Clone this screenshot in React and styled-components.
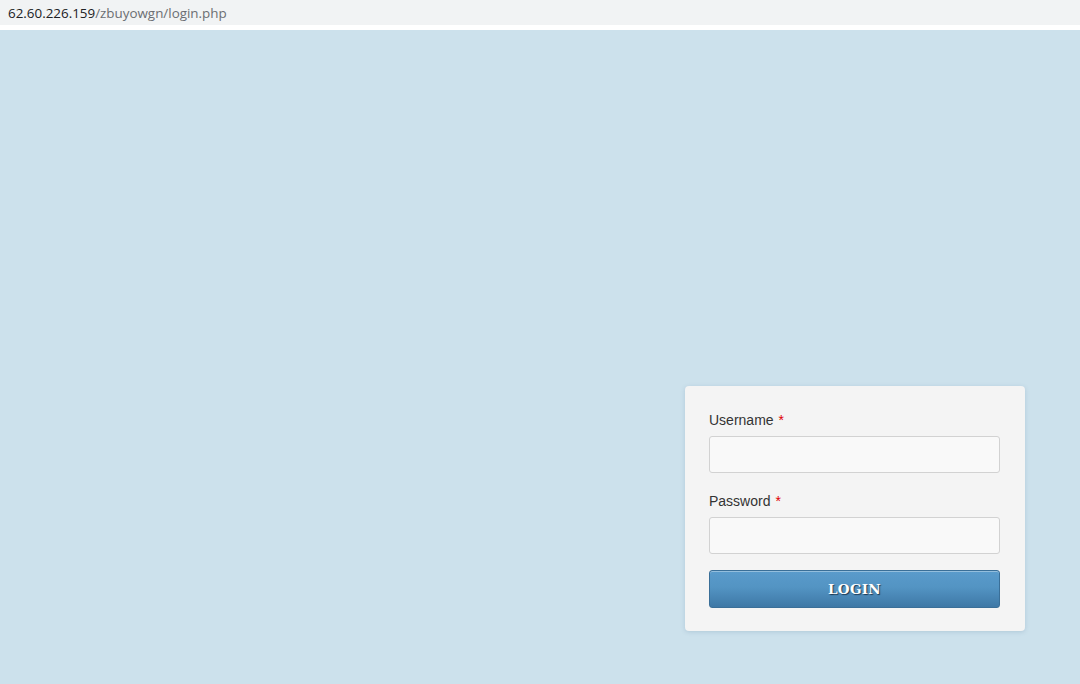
import styled, { createGlobalStyle } from "styled-components";

const GlobalStyle = createGlobalStyle`
  html, body {
    margin: 0;
    padding: 0;
    height: 100%;
  }
  body {
    background: #cce1ec;
    font-family: "Liberation Sans", Arial, sans-serif;
  }
  #root {
    min-height: 100%;
  }
`;

const Page = styled.div`
  display: flex;
  flex-direction: column;
  height: 684px;
  overflow: hidden;
`;

const AddressBar = styled.div`
  height: 25px;
  flex: none;
  display: flex;
  align-items: center;
  padding: 0 8px;
  background: #f1f3f4;
  border-bottom: 5px solid #ffffff;
  font-family: "Open Sans", "Noto Sans", sans-serif;
  font-size: 13.4px;
  color: #202124;
`;

const Path = styled.span`
  color: #6b6e72;
`;

const Stage = styled.main`
  flex: 1;
  display: flex;
  justify-content: flex-end;
  align-items: flex-start;
  padding: 356px 55px 0 0;
`;

const Card = styled.form`
  width: 340px;
  box-sizing: border-box;
  padding: 25px 25px 23px 24px;
  background: #f4f4f4;
  border-radius: 4px;
  box-shadow: 0 1px 4px rgba(90, 130, 160, 0.25);
  display: flex;
  flex-direction: column;
`;

const Field = styled.div`
  display: flex;
  flex-direction: column;
  margin-bottom: ${(p) => p.$gap || "18px"};
`;

const Label = styled.label`
  font-size: 14px;
  color: #333333;
  line-height: 18px;
  margin: 0 0 7px 0;
`;

const Required = styled.span`
  color: #e00000;
  margin-left: 5px;
`;

const Input = styled.input`
  height: 37px;
  box-sizing: border-box;
  border: 1px solid #d2d2d2;
  border-radius: 3px;
  background: #f9f9f9;
  padding: 0 8px;
  font-size: 14px;
  outline: none;
`;

const LoginButton = styled.button`
  height: 38px;
  border: 1px solid #3a6f98;
  border-radius: 3px;
  background: linear-gradient(#5a9bcb, #5394c3 45%, #3e78a6);
  box-shadow: inset 0 1px 0 rgba(255, 255, 255, 0.35);
  color: #ffffff;
  font-family: "DejaVu Serif", "Liberation Serif", serif;
  font-weight: bold;
  font-size: 13.5px;
  letter-spacing: 0.3px;
  text-shadow: 1px 1px 1px #1d3850;
  cursor: pointer;
`;

export default function App() {
  return (
    <>
      <GlobalStyle />
      <Page>
        <AddressBar>
          62.60.226.159<Path>/zbuyowgn/login.php</Path>
        </AddressBar>
        <Stage>
          <Card onSubmit={(e) => e.preventDefault()}>
            <Field $gap="19px">
              <Label>
                Username<Required>*</Required>
              </Label>
              <Input type="text" />
            </Field>
            <Field $gap="16px">
              <Label>
                Password<Required>*</Required>
              </Label>
              <Input type="password" />
            </Field>
            <LoginButton type="submit">LOGIN</LoginButton>
          </Card>
        </Stage>
      </Page>
    </>
  );
}
